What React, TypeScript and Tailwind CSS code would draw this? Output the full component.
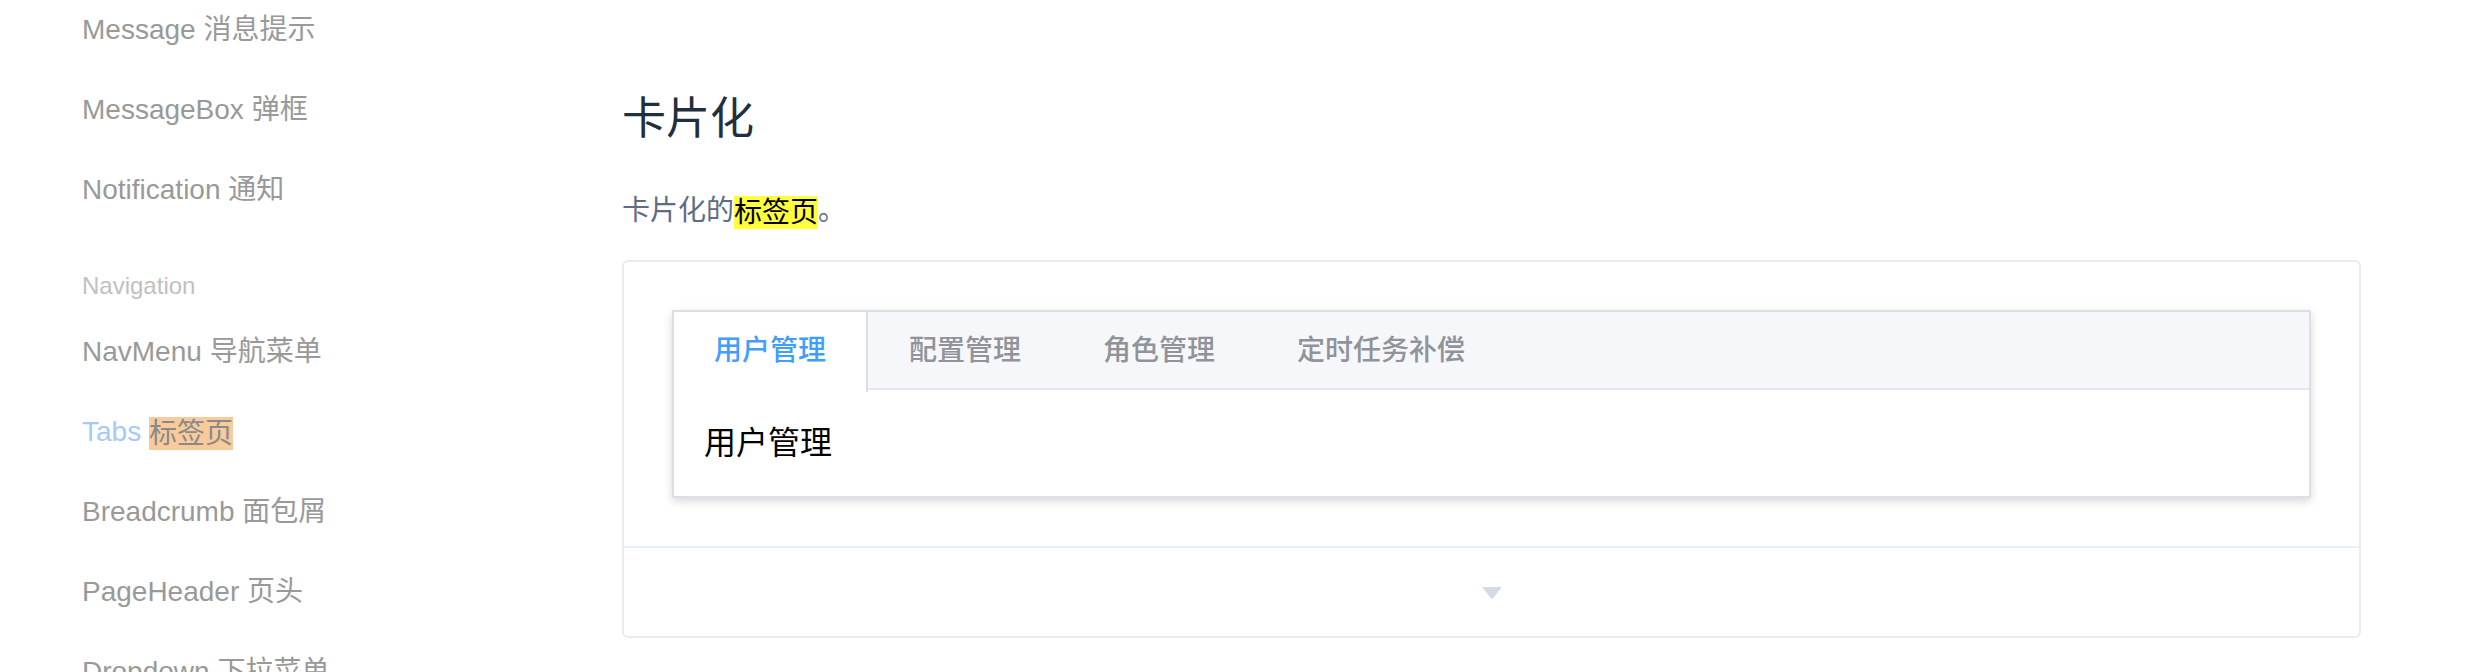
import React from "react";

const noticeItems = ["Message 消息提示", "MessageBox 弹框", "Notification 通知"];

const navItems = [
  { en: "NavMenu", zh: "导航菜单" },
  { en: "Tabs", zh: "标签页", active: true },
  { en: "Breadcrumb", zh: "面包屑" },
  { en: "PageHeader", zh: "页头" },
  { en: "Dropdown", zh: "下拉菜单" },
];

const tabs = ["用户管理", "配置管理", "角色管理", "定时任务补偿"];

function Sidebar() {
  return (
    <aside className="w-[622px] shrink-0 pl-[82px]">
      <ul className="-mt-[10px]">
        {noticeItems.map((item) => (
          <li key={item} className="h-[80px] text-[28px] leading-[80px] text-[#999999]">
            {item}
          </li>
        ))}
      </ul>
      <div className="mt-[30px] text-[24px] leading-[52px] text-[#c0c0c0]">Navigation</div>
      <ul>
        {navItems.map((item) =>
          item.active ? (
            <li key={item.en} className="h-[80px] text-[28px] leading-[80px] text-[#a6c9fa]">
              {item.en}{" "}
              <span className="inline-block h-[33px] bg-[#f8ca9c] align-middle leading-[33px] text-[#8a8a8a]">
                {item.zh}
              </span>
            </li>
          ) : (
            <li key={item.en} className="h-[80px] text-[28px] leading-[80px] text-[#999999]">
              {item.en} {item.zh}
            </li>
          )
        )}
      </ul>
    </aside>
  );
}

function CardTabs() {
  return (
    <div className="border-2 border-[#dcdfe6] bg-white shadow-[0_4px_8px_0_rgba(0,0,0,0.12),0_0_12px_0_rgba(0,0,0,0.04)]">
      <div className="flex h-[78px] border-b-2 border-[#e4e7ed] bg-[#f5f7fa]">
        {tabs.map((tab, i) =>
          i === 0 ? (
            <div
              key={tab}
              className="-mb-[2px] h-[80px] border-r-2 border-[#dcdfe6] bg-white px-[40px] text-[28px] font-medium leading-[78px] text-[#409eff]"
            >
              {tab}
            </div>
          ) : (
            <div key={tab} className="px-[41px] text-[28px] font-medium leading-[78px] text-[#909399]">
              {tab}
            </div>
          )
        )}
      </div>
      <div className="p-[30px] text-[32px] leading-[46px] text-black">用户管理</div>
    </div>
  );
}

export default function App() {
  return (
    <div className="flex h-[672px] w-full overflow-hidden bg-white font-['Liberation_Sans','Noto_Sans_CJK_SC',sans-serif]">
      <Sidebar />
      <main className="flex-1 pr-[127px] pt-[88px]">
        <h3 className="h-[62px] text-[44px] font-normal leading-[62px] text-[#1f2f3d]">卡片化</h3>
        <p className="mt-[40px] text-[28px] leading-[42px] text-[#5e6d82]">
          卡片化的
          <span className="inline-block h-[33px] bg-[#ffff3c] align-middle leading-[33px] text-black">标签页</span>。
        </p>
        <section className="mt-[28px] rounded-[6px] border-2 border-[#ebebeb]">
          <div className="p-[48px]">
            <CardTabs />
          </div>
          <div className="flex h-[90px] items-center justify-center border-t-2 border-[#eaeefb]">
            <svg width="20" height="12" viewBox="0 0 20 12" className="mt-[2px]">
              <path d="M0 0 H20 L10.8 11.4 Q10 12 9.2 11.4 Z" fill="#d3dce6" />
            </svg>
          </div>
        </section>
      </main>
    </div>
  );
}
